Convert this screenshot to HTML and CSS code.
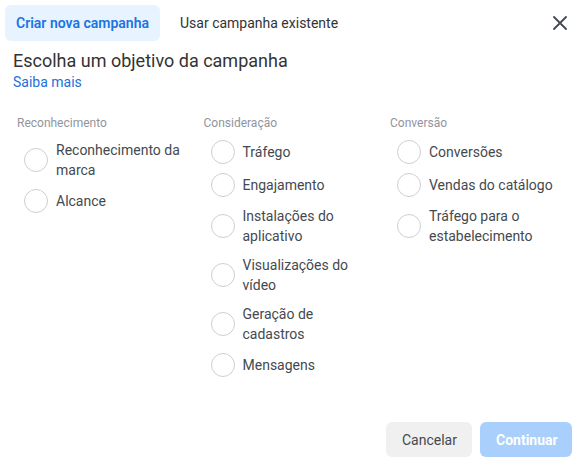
FILE: index.html
```html
<!DOCTYPE html>
<html lang="pt-BR">
<head>
<meta charset="utf-8">
<title>Criar nova campanha</title>
<link rel="stylesheet" href="styles.css">
</head>
<body>
<div class="dialog">
  <div class="header">
    <div class="tab tab-active">Criar nova campanha</div>
    <div class="tab">Usar campanha existente</div>
    <button class="close" aria-label="Fechar">
      <svg width="14" height="14" viewBox="0 0 14 14"><path d="M1 1L13 13M13 1L1 13" stroke="#444950" stroke-width="1.8" stroke-linecap="round"/></svg>
    </button>
  </div>
  <div class="intro">
    <div class="title">Escolha um objetivo da campanha</div>
    <a class="link" href="#">Saiba mais</a>
  </div>
  <div class="columns">
    <div class="col">
      <div class="col-head">Reconhecimento</div>
      <div class="opts">
        <div class="opt"><span class="radio"></span><span class="label">Reconhecimento da marca</span></div>
        <div class="opt"><span class="radio"></span><span class="label">Alcance</span></div>
      </div>
    </div>
    <div class="col">
      <div class="col-head">Consideração</div>
      <div class="opts">
        <div class="opt"><span class="radio"></span><span class="label">Tráfego</span></div>
        <div class="opt"><span class="radio"></span><span class="label">Engajamento</span></div>
        <div class="opt"><span class="radio"></span><span class="label">Instalações do aplicativo</span></div>
        <div class="opt"><span class="radio"></span><span class="label">Visualizações do vídeo</span></div>
        <div class="opt"><span class="radio"></span><span class="label">Geração de cadastros</span></div>
        <div class="opt"><span class="radio"></span><span class="label">Mensagens</span></div>
      </div>
    </div>
    <div class="col">
      <div class="col-head">Conversão</div>
      <div class="opts">
        <div class="opt"><span class="radio"></span><span class="label">Conversões</span></div>
        <div class="opt"><span class="radio"></span><span class="label">Vendas do catálogo</span></div>
        <div class="opt"><span class="radio"></span><span class="label">Tráfego para o estabelecimento</span></div>
      </div>
    </div>
  </div>
  <div class="footer">
    <button class="btn btn-cancel">Cancelar</button>
    <button class="btn btn-primary">Continuar</button>
  </div>
</div>
</body>
</html>
```
FILE: styles.css
```css
* { box-sizing: border-box; }
html, body { margin: 0; padding: 0; background: #fff; }
body { font-family: Roboto, "Liberation Sans", Arial, sans-serif; color: #1c1e21; }

.dialog {
  width: 587px;
  height: 468px;
  display: flex;
  flex-direction: column;
  background: #fff;
}

.header {
  display: flex;
  align-items: center;
  padding: 5px 15px 0 5px;
  gap: 8px;
}
.tab {
  flex: none;
  height: 36px;
  padding: 0 12px;
  display: flex;
  align-items: center;
  font-size: 14px;
  color: #333;
  border-radius: 6px;
  white-space: nowrap;
}
.tab-active {
  width: 155px;
  padding: 0;
  justify-content: center;
  background: #e7f3ff;
  color: #1b74e4;
  font-weight: 600;
}
.close {
  margin-left: auto;
  width: 24px;
  height: 24px;
  border: 0;
  padding: 0;
  background: transparent;
  display: flex;
  align-items: center;
  justify-content: center;
}

.intro {
  padding: 8px 0 0 13px;
}
.title {
  font-size: 18px;
  line-height: 24px;
  color: #333;
}
.link {
  display: block;
  font-size: 14px;
  line-height: 18px;
  color: #216fdb;
  text-decoration: none;
}

.columns {
  display: grid;
  grid-template-columns: repeat(3, 186.5px);
  padding: 24px 0 0 17px;
}
.col-head {
  font-size: 12px;
  line-height: 16px;
  color: #90949c;
}
.opts {
  display: flex;
  flex-direction: column;
  gap: 9px;
  margin-top: 9px;
  padding-left: 7px;
}
.opt {
  display: flex;
  align-items: center;
  gap: 8px;
  min-height: 24px;
}
.radio {
  flex: none;
  width: 24px;
  height: 24px;
  border: 1px solid #ccd0d5;
  border-radius: 50%;
}
.label {
  max-width: 128px;
  font-size: 14px;
  line-height: 20px;
  color: #444950;
}

.footer {
  margin-top: auto;
  display: flex;
  justify-content: flex-end;
  gap: 8px;
  padding: 0 15px 11px 0;
}
.btn {
  height: 35px;
  padding: 0 16px;
  border: 0;
  border-radius: 6px;
  font-family: Roboto, "Liberation Sans", Arial, sans-serif;
  font-size: 14px;
}
.btn-cancel {
  width: 86px;
  background: #f0f0f0;
  color: #444950;
}
.btn-primary {
  width: 92px;
  background: #a9d0fd;
  color: #fff;
  font-weight: 700;
}
```
